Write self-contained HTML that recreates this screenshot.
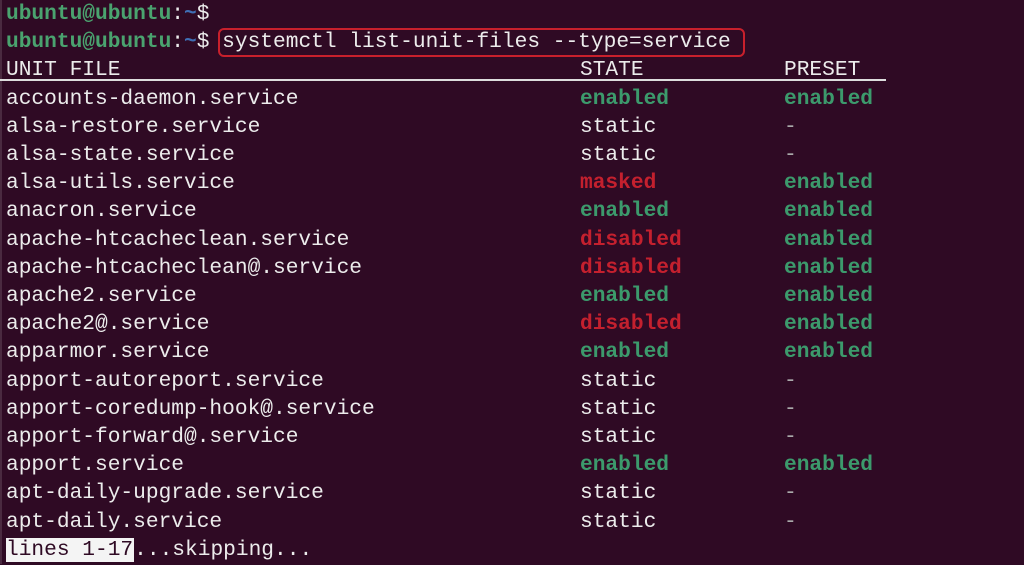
<!DOCTYPE html>
<html><head><meta charset="utf-8"><style>
html,body{margin:0;padding:0;}
body{width:1024px;height:564px;background:#2f0a24;overflow:hidden;position:relative;font-family:"Liberation Mono",monospace;font-size:21.2px;color:#ececec;}
.w{position:absolute;left:0;top:1px;width:1024px;height:564px;}
.r{position:absolute;left:0;height:28.2px;line-height:28.2px;white-space:pre;width:1024px;}
.r span{position:absolute;top:0;}
.a{left:6px}.b{left:580px}.c{left:784px}
.g{color:#3c9a6c;font-weight:bold}
.rd{color:#c4202e;font-weight:bold}
.pg{color:#4aa36f;font-weight:bold}
.pb{color:#3f6fb5;font-weight:bold}
.d{color:#aaa}
.box{position:absolute;left:218px;top:28px;width:523px;height:25px;border:2px solid #c8202c;border-radius:6px;}
.ul{position:absolute;left:0;top:79px;width:886px;height:1.5px;background:#ddd;}
.inv{background:#f4f4f4;color:#2f0a24;}
.edge{position:absolute;left:0;top:0;width:2px;height:564px;background:#4a2a40;}
</style></head><body>
<div class="edge"></div>
<div class="box"></div>
<div class="ul"></div>
<div class="w">
<div class="r" style="top:-1px"><span class="a"><b class="pg">ubuntu@ubuntu</b>:<b class="pb">~</b>$</span></div>
<div class="r" style="top:27.2px"><span class="a"><b class="pg">ubuntu@ubuntu</b>:<b class="pb">~</b>$ systemctl list-unit-files --type=service</span></div>
<div class="r" style="top:55.4px"><span class="a">UNIT FILE</span><span class="b">STATE</span><span class="c">PRESET</span></div>
<div class="r" style="top:83.6px"><span class="a">accounts-daemon.service</span><span class="b g">enabled</span><span class="c g">enabled</span></div>
<div class="r" style="top:111.8px"><span class="a">alsa-restore.service</span><span class="b">static</span><span class="c d">-</span></div>
<div class="r" style="top:140px"><span class="a">alsa-state.service</span><span class="b">static</span><span class="c d">-</span></div>
<div class="r" style="top:168.2px"><span class="a">alsa-utils.service</span><span class="b rd">masked</span><span class="c g">enabled</span></div>
<div class="r" style="top:196.4px"><span class="a">anacron.service</span><span class="b g">enabled</span><span class="c g">enabled</span></div>
<div class="r" style="top:224.6px"><span class="a">apache-htcacheclean.service</span><span class="b rd">disabled</span><span class="c g">enabled</span></div>
<div class="r" style="top:252.8px"><span class="a">apache-htcacheclean@.service</span><span class="b rd">disabled</span><span class="c g">enabled</span></div>
<div class="r" style="top:281px"><span class="a">apache2.service</span><span class="b g">enabled</span><span class="c g">enabled</span></div>
<div class="r" style="top:309.2px"><span class="a">apache2@.service</span><span class="b rd">disabled</span><span class="c g">enabled</span></div>
<div class="r" style="top:337.4px"><span class="a">apparmor.service</span><span class="b g">enabled</span><span class="c g">enabled</span></div>
<div class="r" style="top:365.6px"><span class="a">apport-autoreport.service</span><span class="b">static</span><span class="c d">-</span></div>
<div class="r" style="top:393.8px"><span class="a">apport-coredump-hook@.service</span><span class="b">static</span><span class="c d">-</span></div>
<div class="r" style="top:422px"><span class="a">apport-forward@.service</span><span class="b">static</span><span class="c d">-</span></div>
<div class="r" style="top:450.2px"><span class="a">apport.service</span><span class="b g">enabled</span><span class="c g">enabled</span></div>
<div class="r" style="top:478.4px"><span class="a">apt-daily-upgrade.service</span><span class="b">static</span><span class="c d">-</span></div>
<div class="r" style="top:506.6px"><span class="a">apt-daily.service</span><span class="b">static</span><span class="c d">-</span></div>
<div class="r" style="top:534.8px"><span class="a"><span class="inv" style="position:static;padding:0 1px 0 0">lines 1-17</span>...skipping...</span></div>
</div>
</body></html>
